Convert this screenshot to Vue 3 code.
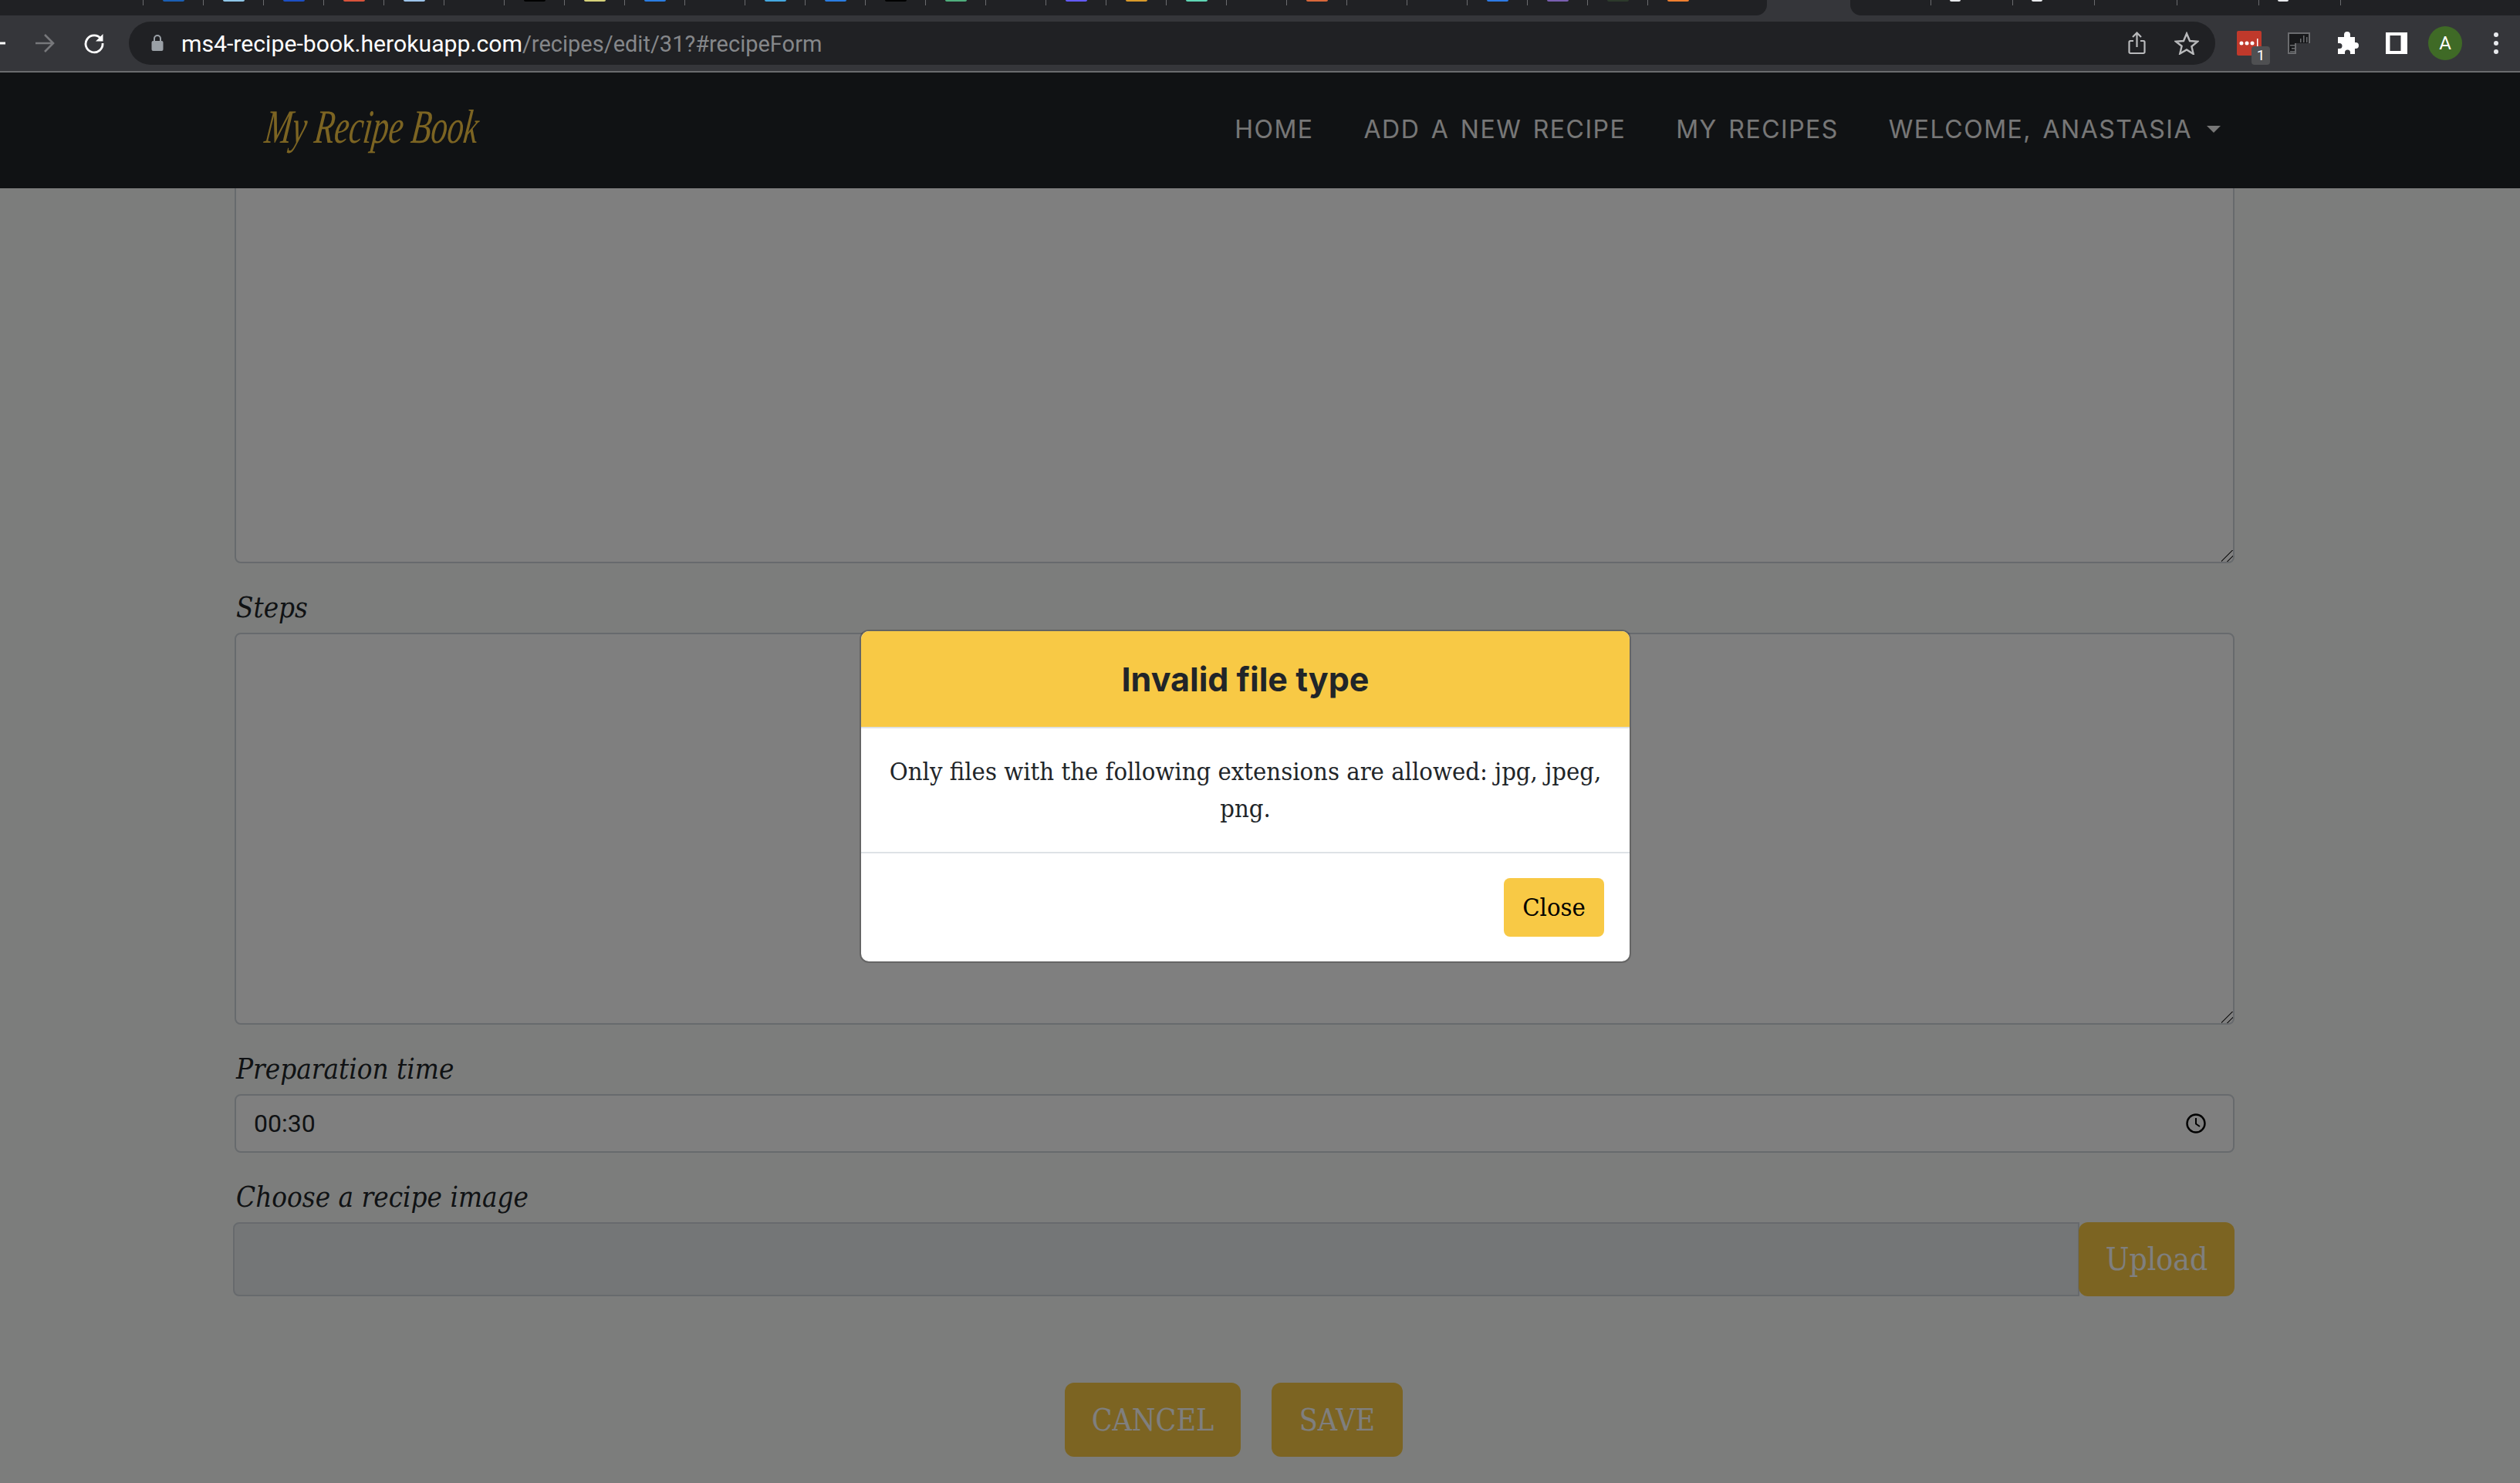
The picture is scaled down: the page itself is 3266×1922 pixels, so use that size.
<script setup>
const leftTabs = [
  { color: '#1a5fb4' },
  { color: '#8fc7e8' },
  { color: '#1c4fc4' },
  { color: '#d9533b' },
  { color: '#9cc4ea' },
  { color: null },
  { color: '#000000' },
  { color: '#d6d27a' },
  { color: '#2a7de1' },
  { color: null },
  { color: '#45a8e0' },
  { color: '#2a7de1' },
  { color: '#000000' },
  { color: '#4fae7d' },
  { color: null },
  { color: '#635bff' },
  { color: '#d99a2b' },
  { color: '#5fd6b5' },
  { color: null },
  { color: '#d9683b' },
  { color: null },
  { color: null },
  { color: '#2d7be5' },
  { color: '#7a5fb0' },
  { color: '#2c3a2c' },
  { color: '#f08030' },
]

const rightTabs = [
  { color: '#e8eaed' },
  { color: '#e8eaed' },
  { color: null },
  { color: null },
  { color: '#e8eaed' },
  { color: null },
]

const navLinks = ['Home', 'Add a new recipe', 'My recipes']
</script>

<template>
  <div class="screen">
    <!-- browser window chrome -->
    <div class="tabstrip">
      <div class="tabs tabs-left">
        <div v-for="(t, i) in leftTabs" :key="i" class="tab">
          <span v-if="t.color" class="favicon" :style="{ background: t.color }"></span>
        </div>
      </div>
      <div class="tabs tabs-right">
        <div v-for="(t, i) in rightTabs" :key="i" class="tab tab-wide">
          <span v-if="t.color" class="favicon favicon-small" :style="{ background: t.color }"></span>
        </div>
      </div>
    </div>

    <div class="toolbar">
      <svg class="back" width="7" height="4" viewBox="0 0 7 4"><rect width="7" height="3" y="0.5" fill="#fff" /></svg>
      <svg class="forward" width="26" height="26" viewBox="0 0 26 26" fill="none" stroke="#77787b" stroke-width="2.6">
        <path d="M1 13h23M13 2l11 11-11 11" />
      </svg>
      <svg class="reload" width="28" height="28" viewBox="0 0 28 28" fill="none">
        <path d="M23 8.500A11 11 0 1 0 25 14" stroke="#fff" stroke-width="2.8" />
        <path d="M25.500 2v9.500H16z" fill="#fff" />
      </svg>
      <div class="omnibox">
        <svg class="lock" width="16" height="22" viewBox="0 0 16 22">
          <path d="M4 10V6a4 4 0 0 1 8 0v4" fill="none" stroke="#9aa0a6" stroke-width="2" />
          <rect x="0.500" y="9" width="15" height="13" rx="2" fill="#9aa0a6" />
        </svg>
        <div class="url"><span class="url-host">ms4-recipe-book.herokuapp.com</span>/recipes/edit/31?#recipeForm</div>
        <svg class="share" width="23" height="30" viewBox="0 0 23 30" fill="none" stroke="#b9babc" stroke-width="2.2">
          <path d="M11.500 20V2M6 7l5.500-5.500L17 7" />
          <path d="M7 12H3a1.500 1.500 0 0 0-1.500 1.500v13A1.500 1.500 0 0 0 3 28h17a1.500 1.500 0 0 0 1.500-1.500v-13A1.500 1.500 0 0 0 20 12h-4" />
        </svg>
        <svg class="star" width="32" height="30" viewBox="0 0 32 30" fill="none" stroke="#b9babc" stroke-width="2.4">
          <path d="M16 2.500l4 9.500 10 .8-7.600 6.500 2.300 9.700L16 23.400l-8.700 5.100 2.300-9.700L2 12.800l10-.8z" />
        </svg>
      </div>
      <div class="ext ext-red">
        <svg width="32" height="32" viewBox="0 0 32 32">
          <rect width="32" height="32" rx="2" fill="#c0392b" />
          <circle cx="6" cy="16" r="2.500" fill="#fff" />
          <circle cx="13" cy="16" r="2.500" fill="#fff" />
          <circle cx="20" cy="16" r="2.500" fill="#fff" />
          <rect x="26" y="10" width="1.500" height="10" fill="#fff" />
        </svg>
        <span class="ext-badge">1</span>
      </div>
      <svg class="ext-ruler" width="29" height="28" viewBox="0 0 29 28" fill="#6b6c6f">
        <path d="M0 0h29v14H11v14H0z" fill="#17181a" />
        <path d="M0 0h29v14h-2V2H2v24h7v-12h2v14H0z" />
        <path d="M16 13V8h1.500v5zM20 13V4h1.500v9zM24 13V6h1.500v7zM3 16h6v1.500H3zM5 20h4v1.500H5zM3 24h6v1.500H3z" />
      </svg>
      <svg class="ext-puzzle" width="30" height="30" viewBox="0 0 30 30" fill="#fff">
        <path d="M3 7h8V4a4 4 0 0 1 8 0v3h6v7h1a4 4 0 0 1 0 8h-1v7h-6v-2a3.500 3.500 0 0 0-7 0v2H3v-7h2a3.500 3.500 0 0 0 0-7H3z" />
      </svg>
      <svg class="side-panel" width="28" height="28" viewBox="0 0 28 28">
        <rect width="28" height="28" fill="#fff" />
        <rect x="5.500" y="4" width="14" height="20" fill="#35363a" />
      </svg>
      <div class="avatar">A</div>
      <div class="kebab"><i></i><i></i><i></i></div>
    </div>
    <div class="chrome-line"></div>

    <!-- site navbar -->
    <nav class="navbar">
      <a class="brand">My Recipe Book</a>
      <ul class="nav-links">
        <li v-for="l in navLinks" :key="l">{{ l }}</li>
        <li class="dropdown">Welcome, Anastasia<span class="caret"></span></li>
      </ul>
    </nav>

    <main class="page">
      <form class="recipe-form" @submit.prevent>
        <textarea class="field area-first"></textarea>

        <label class="form-label">Steps</label>
        <textarea class="field area-steps"></textarea>

        <label class="form-label">Preparation time</label>
        <div class="field time-field">
          <span>00:30</span>
          <svg width="26" height="26" viewBox="0 0 26 26" fill="none" stroke="#000" stroke-width="2.400">
            <circle cx="13" cy="13" r="11.500" />
            <path d="M13 6v7.500l5 3.500" stroke-width="2" />
          </svg>
        </div>

        <label class="form-label">Choose a recipe image</label>
        <div class="upload-group">
          <div class="file-field"></div>
          <button type="button" class="btn-upload">Upload</button>
        </div>

        <div class="form-actions">
          <button type="button" class="btn-action cancel">CANCEL</button>
          <button type="submit" class="btn-action save">SAVE</button>
        </div>
      </form>
    </main>

    <!-- dimmed backdrop with the modal -->
    <div class="backdrop">
      <div class="modal">
        <div class="modal-header">Invalid file type</div>
        <div class="modal-body">Only files with the following extensions are allowed: jpg, jpeg, png.</div>
        <div class="modal-footer">
          <button type="button" class="btn-close">Close</button>
        </div>
      </div>
    </div>
  </div>
</template>

<style>
html, body { margin: 0; background: #f8fbf8; }
</style>

<style scoped>
.screen {
  position: relative;
  width: 3266px;
  height: 1922px;
  overflow: hidden;
  display: flex;
  flex-direction: column;
  background: #f8fbf8;
  font-family: "DejaVu Serif Condensed", "DejaVu Serif", serif;
}

.tabstrip {
  height: 20px;
  flex: none;
  display: flex;
  justify-content: space-between;
  background: #35363a;
}
.tabs {
  display: flex;
  height: 20px;
  background: #202124;
}
.tabs-left {
  width: 2290px;
  padding-left: 185px;
  box-sizing: border-box;
  border-bottom-right-radius: 14px;
}
.tabs-right {
  width: 868px;
  padding-left: 104px;
  box-sizing: border-box;
  border-bottom-left-radius: 14px;
}
.tab {
  width: 78px;
  height: 7px;
  flex: none;
  box-sizing: border-box;
  border-left: 1px solid #6a6b6e;
  display: flex;
  justify-content: center;
}
.tab-wide {
  width: 106.200px;
  justify-content: flex-start;
  padding-left: 24px;
}
.favicon {
  width: 28px;
  height: 2px;
  border-radius: 0 0 6px 6px;
}
.favicon-small { width: 14px; height: 2px; }

.toolbar {
  height: 72px;
  flex: none;
  display: flex;
  align-items: center;
  background: #35363a;
}
.back { flex: none; }
.forward { margin-left: 38px; flex: none; }
.reload { margin-left: 37px; flex: none; }
.omnibox {
  margin-left: 31px;
  width: 2704px;
  height: 56px;
  flex: none;
  box-sizing: border-box;
  padding: 0 21px 0 29px;
  display: flex;
  align-items: center;
  background: #202124;
  border-radius: 28px;
}
.lock { flex: none; margin-top: -2px; }
.url {
  margin-left: 23px;
  font: 400 29px "Roboto", sans-serif;
  color: #85878a;
  white-space: nowrap;
}
.url-host { color: #fff; font-size: 30.200px; }
.share { margin-left: auto; flex: none; }
.star { margin-left: 37px; flex: none; }
.ext { position: relative; flex: none; }
.ext svg { display: block; }
.ext-red { margin-left: 28px; }
.ext-badge {
  position: absolute;
  left: 19px;
  top: 20px;
  width: 24px;
  height: 24px;
  border-radius: 4px;
  background: #4f5052;
  color: #fff;
  font: 400 19px/24px "Roboto", sans-serif;
  text-align: center;
}
.ext-ruler { margin-left: 34px; flex: none; }
.ext-puzzle { margin-left: 33px; flex: none; }
.side-panel { margin-left: 35px; flex: none; }
.avatar {
  margin-left: 27px;
  width: 44px;
  height: 44px;
  flex: none;
  border-radius: 50%;
  background: #3f6a26;
  color: #fff;
  font: 400 24px/44px "Roboto", sans-serif;
  text-align: center;
}
.kebab {
  margin-left: 41px;
  flex: none;
  display: flex;
  flex-direction: column;
  gap: 5px;
}
.kebab i {
  width: 6px;
  height: 6px;
  border-radius: 50%;
  background: #e8eaed;
}
.chrome-line { height: 2px; flex: none; background: #6a6b6e; }

.navbar {
  height: 150px;
  flex: none;
  display: flex;
  align-items: center;
  padding: 0 388px 0 344px;
  background: #212529;
}
.brand {
  font: italic 400 62px "Liberation Serif", serif;
  color: #f8c945;
  white-space: nowrap;
  transform: scaleX(0.68) skewX(-10deg);
  transform-origin: left center;
  margin-top: -10px;
}
.nav-links {
  display: flex;
  align-items: center;
  gap: 65px;
  margin: -4px 0 0 auto;
  padding: 0;
  list-style: none;
  font: 400 32px "Inter", sans-serif;
  letter-spacing: 1.500px;
  word-spacing: 4px;
  text-transform: uppercase;
  color: #eeeeee;
  white-space: nowrap;
}
.dropdown { display: flex; align-items: center; }
.caret {
  margin-left: 19px;
  width: 0;
  height: 0;
  border-top: 9px solid #eeeeee;
  border-left: 9.500px solid transparent;
  border-right: 9.500px solid transparent;
}

.page {
  flex: 1;
  min-height: 0;
  overflow: hidden;
}
.recipe-form {
  display: flex;
  flex-direction: column;
  padding: 0 370px 0 304px;
  margin-top: -12px;
  color: #212529;
}
.field {
  display: block;
  box-sizing: border-box;
  width: 100%;
  margin: 0;
  background: #fff;
  border: 2px solid #ced4da;
  border-radius: 8px;
  outline: none;
  resize: vertical;
}
textarea.field::-webkit-resizer {
  background: linear-gradient(135deg, transparent 46%, #555 46% 53%, transparent 53% 72%, #555 72% 79%, transparent 79%);
}
.area-first { height: 498px; }
.area-steps { height: 508px; }
.form-label {
  margin: 34px 0 8px;
  height: 48px;
  font-size: 36.500px;
  line-height: 48px;
  font-style: italic;
  padding-left: 2px;
}
.time-field {
  height: 76px;
  display: flex;
  align-items: center;
  justify-content: space-between;
  padding: 0 35px 0 23px;
  font: 400 32px "Roboto", sans-serif;
  color: #212529;
}
.upload-group {
  display: flex;
  height: 96px;
  margin-left: -2px;
}
.file-field {
  flex: 1;
  box-sizing: border-box;
  background: #e9ecef;
  border: 2px solid #ced4da;
  border-radius: 8px 0 0 8px;
}
.btn-upload {
  width: 202px;
  margin-left: -1px;
  border: 0;
  border-radius: 12px;
  background: #f8c945;
  color: #fff;
  font: 400 40.500px "DejaVu Serif Condensed", "DejaVu Serif", serif;
}
.form-actions {
  display: flex;
  justify-content: center;
  gap: 40px;
  margin-top: 112px;
  padding-right: 2px;
}
.btn-action {
  height: 96px;
  border: 0;
  border-radius: 12px;
  background: #f8c945;
  color: #fff;
  font: 400 39px "DejaVu Serif Condensed", "DejaVu Serif", serif;
}
.cancel { width: 228px; }
.save { width: 170px; }

.backdrop {
  position: absolute;
  left: 0;
  right: 0;
  top: 94px;
  bottom: 0;
  display: flex;
  justify-content: center;
  align-items: flex-start;
  padding: 722px 38px 0 0;
  background: rgba(0, 0, 0, 0.5);
}
.modal {
  width: 1000px;
  box-sizing: border-box;
  background: #fff;
  border: 2px solid rgba(0, 0, 0, 0.2);
  background-clip: padding-box;
  border-radius: 12px;
  overflow: hidden;
}
.modal-header {
  height: 124px;
  background: #f8c945;
  border-bottom: 2px solid #dee2e6;
  text-align: center;
  font: 700 43px/124px "Inter", sans-serif;
  color: #212529;
}
.modal-body {
  padding: 32px;
  font-size: 32.500px;
  line-height: 48px;
  text-align: center;
  color: #212529;
}
.modal-footer {
  display: flex;
  justify-content: flex-end;
  padding: 32px 33px 32px 32px;
  border-top: 2px solid #dee2e6;
}
.btn-close {
  width: 130px;
  height: 76px;
  border: 0;
  border-radius: 8px;
  background: #f8c945;
  color: #000;
  font: 400 32.500px "DejaVu Serif Condensed", "DejaVu Serif", serif;
}
</style>
